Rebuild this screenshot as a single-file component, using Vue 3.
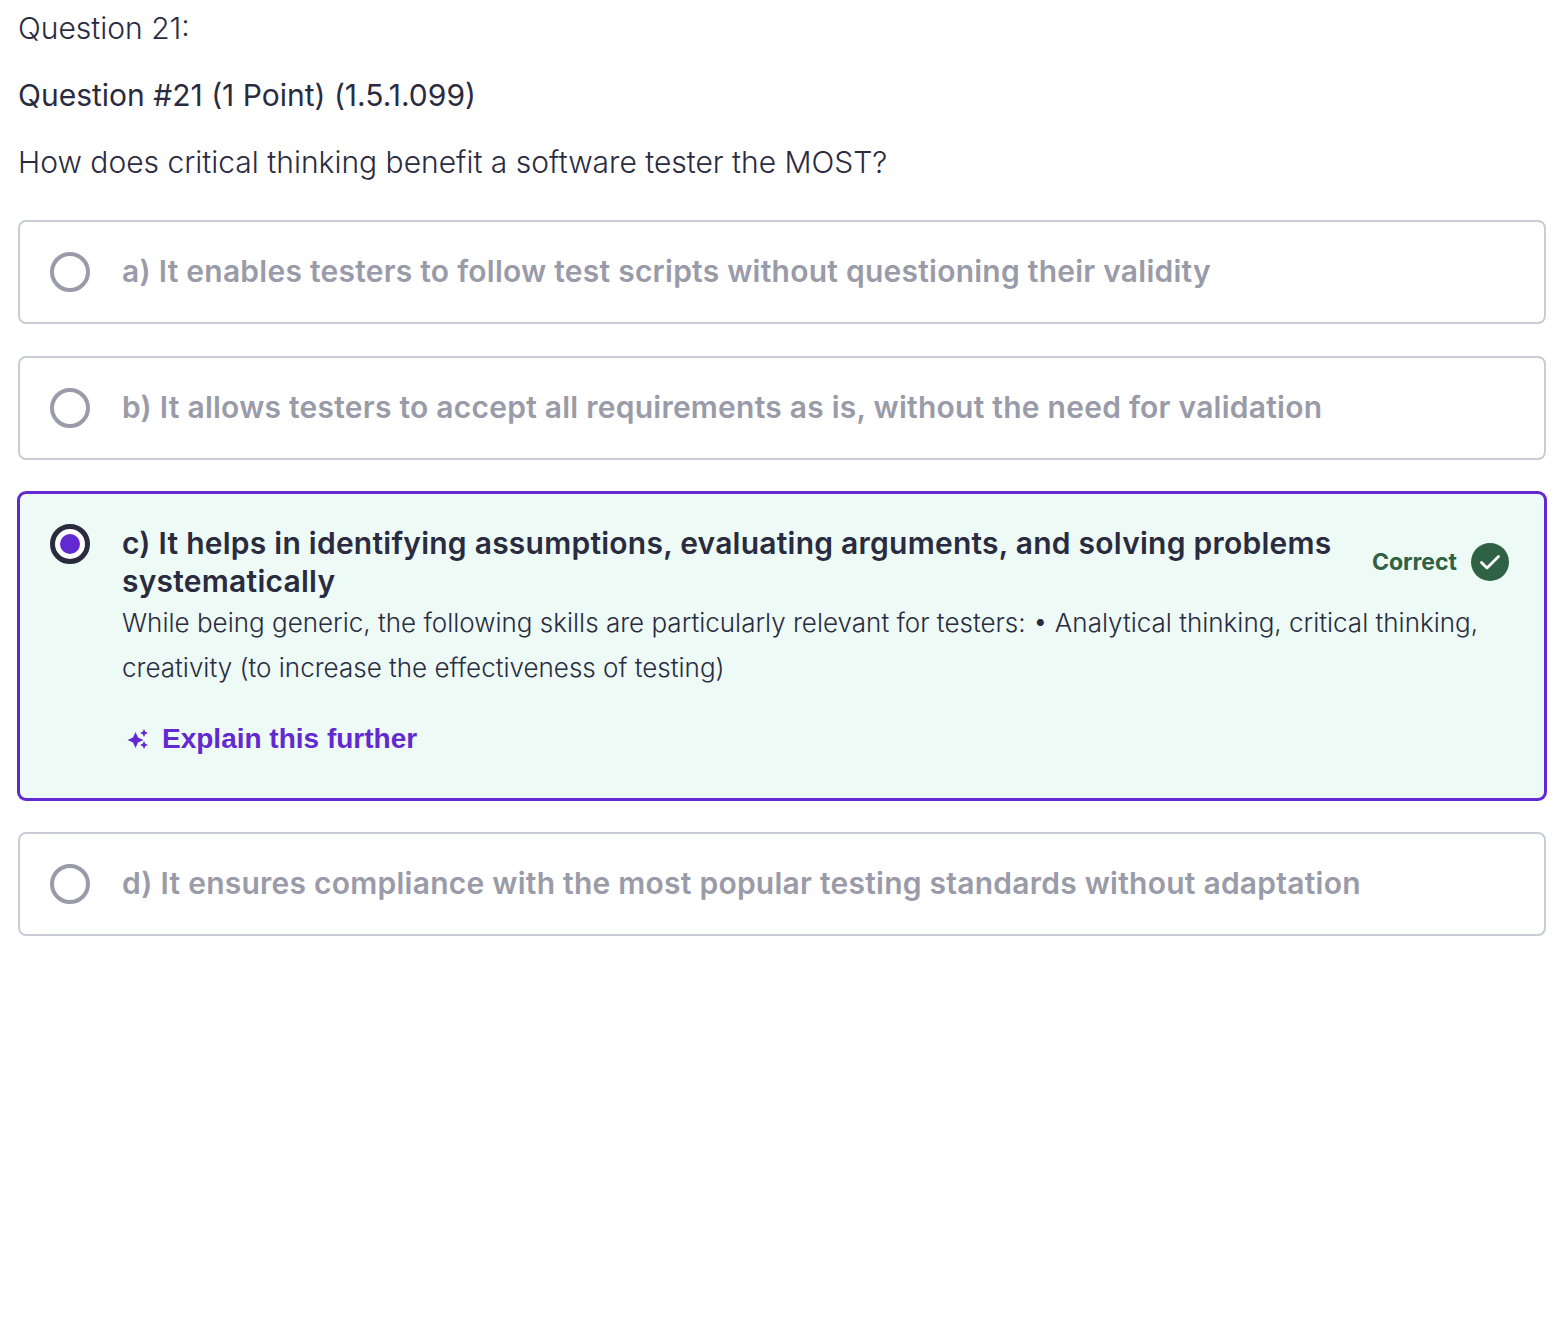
<script setup>
const options = [
  { id: 'a', text: 'a) It enables testers to follow test scripts without questioning their validity' },
  { id: 'b', text: 'b) It allows testers to accept all requirements as is, without the need for validation' },
  {
    id: 'c',
    text: 'c) It helps in identifying assumptions, evaluating arguments, and solving problems systematically',
    correct: true,
    feedback: 'While being generic, the following skills are particularly relevant for testers: • Analytical thinking, critical thinking, creativity (to increase the effectiveness of testing)'
  },
  { id: 'd', text: 'd) It ensures compliance with the most popular testing standards without adaptation' }
]
</script>

<template>
  <div class="page">
    <p class="eyebrow">Question 21:</p>
    <p class="title">Question #21 (1 Point) (1.5.1.099)</p>
    <p class="prompt">How does critical thinking benefit a software tester the MOST?</p>

    <div class="options">
      <div v-for="opt in options" :key="opt.id" class="option" :class="{ selected: opt.correct }">
        <span class="radio"><span v-if="opt.correct" class="dot"></span></span>
        <div class="body">
          <div class="head">
            <div class="label">{{ opt.text }}</div>
            <div v-if="opt.correct" class="status">
              <span>Correct</span>
              <svg class="check" width="38" height="38" viewBox="0 0 38 38">
                <circle cx="19" cy="19" r="19" fill="#2f6144" />
                <path d="M10.5 19.5l5.5 5.5L27.5 13.5" fill="none" stroke="#fff" stroke-width="2.8" stroke-linecap="round" stroke-linejoin="round" />
              </svg>
            </div>
          </div>
          <template v-if="opt.correct">
            <p class="feedback">{{ opt.feedback }}</p>
            <a class="explain" href="#" @click.prevent>
              <svg width="24" height="24" viewBox="0 0 24 24" fill="#6329d1">
                <path d="M9.500 5l2.500 5.500 5.500 2.500-5.500 2.500L9.500 21 7 15.500 1.500 13 7 10.500z" />
                <path d="M18 2l1.300 2.700 2.700 1.300-2.700 1.300L18 10l-1.300-2.700L14 6l2.700-1.300z" />
                <path d="M18 14l1.300 2.700 2.700 1.300-2.700 1.300L18 22l-1.300-2.700L14 18l2.700-1.300z" />
              </svg>
              <span>Explain this further</span>
            </a>
          </template>
        </div>
      </div>
    </div>
  </div>
</template>

<style scoped>
.page {
  padding: 8px 20px 0 18px;
  min-height: 1328px;
  background: #fff;
  color: #2a2b3f;
  font-family: Inter, "Liberation Sans", sans-serif;
}

p {
  margin: 0;
}

.eyebrow,
.title,
.prompt {
  font-size: 30px;
  line-height: 40px;
  font-weight: 300;
}

.title {
  margin-top: 27px;
  font-weight: 400;
}

.prompt {
  margin-top: 27px;
}

.options {
  margin-top: 38px;
  display: flex;
  flex-direction: column;
  gap: 32px;
}

.option {
  display: flex;
  gap: 32px;
  padding: 30px;
  min-height: 104px;
  box-sizing: border-box;
  border: 2px solid #c9cbd6;
  border-radius: 8px;
  color: #9a9ba8;
}

.option.selected {
  padding: 30px 35px 39px 30px;
  border-color: #6329d1;
  box-shadow: 0 0 0 1px #6329d1;
  background: #edfaf5;
  color: #2a2b3f;
}

.radio {
  flex: none;
  width: 40px;
  height: 40px;
  box-sizing: border-box;
  border: 4px solid #9a9ba8;
  border-radius: 50%;
  background: #fff;
  display: flex;
  align-items: center;
  justify-content: center;
}

.selected .radio {
  border: 5px solid #2a2b3f;
}

.dot {
  width: 20px;
  height: 20px;
  border-radius: 50%;
  background: #6329d1;
}

.body {
  flex: 1;
  min-width: 0;
}

.head {
  display: flex;
  align-items: center;
  gap: 36px;
}

.label {
  flex: 1;
  font-size: 30px;
  line-height: 38px;
  font-weight: 600;
  letter-spacing: 0.24px;
}

.status {
  flex: none;
  display: flex;
  align-items: center;
  gap: 14px;
  color: #2f6144;
  font-size: 23px;
  font-weight: 700;
}

.check {
  display: block;
}

.feedback {
  font-size: 26px;
  line-height: 45px;
  font-weight: 300;
}

.explain {
  display: flex;
  align-items: center;
  gap: 12px;
  margin-top: 29px;
  padding-left: 4px;
  color: #6329d1;
  font-family: "Liberation Sans", Arial, sans-serif;
  font-size: 28px;
  line-height: 40px;
  font-weight: 700;
  text-decoration: none;
}
</style>
